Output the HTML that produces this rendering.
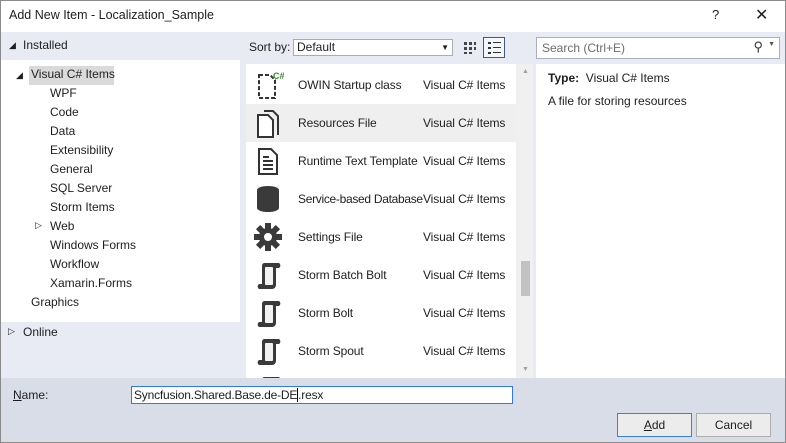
<!DOCTYPE html>
<html><head><style>
*{margin:0;padding:0;box-sizing:border-box}
body{width:786px;height:443px;overflow:hidden;font-family:"Segoe UI","Liberation Sans",sans-serif;font-size:12px;color:#1e1e1e;background:#e8ebf4;position:relative}
.a{position:absolute}
.win{left:0;top:0;width:786px;height:443px;border:1px solid #8a8a8a}
.title{left:1px;top:1px;width:784px;height:31px;background:#fff}
.tree div{position:absolute;white-space:nowrap}
.row{position:absolute;left:0;width:270px;height:38px}
.row .n{position:absolute;left:52px;top:12px;letter-spacing:-.1px}
.row .t{position:absolute;left:177px;top:12px;letter-spacing:-.1px}
.ic{position:absolute;left:8px;top:4px}
.btn{height:24px;width:75px;background:#ececec;border:1px solid #adadad;text-align:center;line-height:22px}
</style></head><body>
<div class="a title"></div>
<div class="a" style="left:9px;top:8px;font-size:12.5px">Add New Item - Localization_Sample</div>
<div class="a" style="left:712px;top:7px;font-size:13px">?</div>
<div class="a" style="left:755px;top:5px;font-size:16px">✕</div>
<div class="a" style="left:9px;top:40px;font-size:9px">◢</div>
<div class="a" style="left:23px;top:38px">Installed</div>
<div class="a" style="left:1px;top:60px;width:239px;height:262px;background:#fff"></div>
<div class="a" style="left:29px;top:66px;width:85px;height:19px;background:#dadada"></div>
<div class="a tree" style="left:0;top:0">
<div style="left:16px;top:70px;font-size:9px">◢</div>
<div style="left:31px;top:67px">Visual C# Items</div>
<div style="left:50px;top:86px">WPF</div>
<div style="left:50px;top:105px">Code</div>
<div style="left:50px;top:124px">Data</div>
<div style="left:50px;top:143px">Extensibility</div>
<div style="left:50px;top:162px">General</div>
<div style="left:50px;top:181px">SQL Server</div>
<div style="left:50px;top:200px">Storm Items</div>
<div style="left:35px;top:220px;font-size:9px">▷</div>
<div style="left:50px;top:219px">Web</div>
<div style="left:50px;top:238px">Windows Forms</div>
<div style="left:50px;top:257px">Workflow</div>
<div style="left:50px;top:276px">Xamarin.Forms</div>
<div style="left:31px;top:295px">Graphics</div>
<div style="left:8px;top:326px;font-size:9px">▷</div>
<div style="left:23px;top:325px">Online</div>
</div>
<div class="a" style="left:249px;top:40px">Sort by:</div>
<div class="a" style="left:293px;top:39px;width:160px;height:17px;background:#fff;border:1px solid #acacac;padding-left:3px;line-height:15px">Default<span style="position:absolute;right:3px;top:0;font-size:8px">▼</span></div>
<svg class="a" style="left:462px;top:40px" width="16" height="16"><g fill="#444"><rect x="2" y="2" width="3" height="3"/><rect x="7" y="2" width="3" height="3"/><rect x="12" y="2" width="2" height="3"/><rect x="2" y="7" width="3" height="3"/><rect x="7" y="7" width="3" height="3"/><rect x="12" y="7" width="2" height="3"/><rect x="2" y="12" width="3" height="2"/><rect x="7" y="12" width="3" height="2"/></g></svg>
<div class="a" style="left:483px;top:37px;width:22px;height:21px;border:1px solid #3c5a8a;background:#f4f6fa"></div>
<svg class="a" style="left:486px;top:40px" width="16" height="16"><g fill="#333"><rect x="2" y="2" width="3" height="2"/><rect x="7" y="2" width="8" height="1"/><rect x="2" y="7" width="3" height="2"/><rect x="7" y="7" width="8" height="1"/><rect x="2" y="12" width="3" height="2"/><rect x="7" y="12" width="8" height="1"/></g></svg>
<div class="a" style="left:536px;top:37px;width:244px;height:22px;background:#fff;border:1px solid #aab0c0;padding:3px 5px;color:#6d6d6d">Search (Ctrl+E)<span style="position:absolute;right:16px;top:1px;color:#333;font-size:13px">⚲</span><span style="position:absolute;right:4px;top:3px;font-size:7px;color:#555">▼</span></div>
<div class="a" style="left:246px;top:64px;width:287px;height:314px;background:#fff;overflow:hidden">
<div class="row" style="top:2px"><svg class="ic" width="30" height="30"><path d="M5 5h11l5 5v18H5z" fill="none" stroke="#333" stroke-width="2" stroke-dasharray="4 2"/><text x="19" y="9" font-size="9" font-weight="bold" fill="#388a34" font-family="Liberation Sans">C#</text></svg><span class="n">OWIN Startup class</span><span class="t">Visual C# Items</span></div>
<div class="row" style="top:40px;background:#efefef"><svg class="ic" width="30" height="30"><path d="M10 3h9l5 5v19" fill="none" stroke="#333" stroke-width="2"/><path d="M4 7h10l5 5v17H4z" fill="#fff" stroke="#333" stroke-width="2"/></svg><span class="n">Resources File</span><span class="t">Visual C# Items</span></div>
<div class="row" style="top:78px"><svg class="ic" width="30" height="30"><path d="M5 3h12l6 6v19H5z" fill="none" stroke="#333" stroke-width="2"/><path d="M9 11h6M9 15h10M9 19h10M9 23h10" stroke="#333" stroke-width="2"/></svg><span class="n">Runtime Text Template</span><span class="t">Visual C# Items</span></div>
<div class="row" style="top:116px"><svg class="ic" width="30" height="30"><path d="M3 6a11 4 0 0 1 22 0v18a11 4 0 0 1-22 0z" fill="#3a3a3a"/></svg><span class="n" style="letter-spacing:-.3px">Service-based Database</span><span class="t">Visual C# Items</span></div>
<div class="row" style="top:154px"><svg class="ic" width="30" height="30"><defs><rect id="t" x="-3" y="-14" width="6" height="28"/></defs><g transform="translate(14 15)" fill="#3a3a3a"><circle r="9"/><use href="#t"/><use href="#t" transform="rotate(45)"/><use href="#t" transform="rotate(90)"/><use href="#t" transform="rotate(135)"/><circle r="4" fill="#fff"/></g></svg><span class="n">Settings File</span><span class="t">Visual C# Items</span></div>
<div class="row" style="top:192px"><svg class="ic" width="30" height="30"><path d="M10 3h15a3 3 0 0 1 0 5h-3v17a4 4 0 0 1-4 4H5a3 3 0 0 1 0-5h3V6a3 3 0 0 1 2-3z" fill="#3a3a3a"/><rect x="11" y="7" width="8" height="18" rx="1" fill="#f2f2f2"/></svg><span class="n">Storm Batch Bolt</span><span class="t">Visual C# Items</span></div>
<div class="row" style="top:230px"><svg class="ic" width="30" height="30"><path d="M10 3h15a3 3 0 0 1 0 5h-3v17a4 4 0 0 1-4 4H5a3 3 0 0 1 0-5h3V6a3 3 0 0 1 2-3z" fill="#3a3a3a"/><rect x="11" y="7" width="8" height="18" rx="1" fill="#f2f2f2"/></svg><span class="n">Storm Bolt</span><span class="t">Visual C# Items</span></div>
<div class="row" style="top:268px"><svg class="ic" width="30" height="30"><path d="M10 3h15a3 3 0 0 1 0 5h-3v17a4 4 0 0 1-4 4H5a3 3 0 0 1 0-5h3V6a3 3 0 0 1 2-3z" fill="#3a3a3a"/><rect x="11" y="7" width="8" height="18" rx="1" fill="#f2f2f2"/></svg><span class="n">Storm Spout</span><span class="t">Visual C# Items</span></div>
<div class="row" style="top:306px"><svg class="ic" width="30" height="30"><path d="M10 3h15a3 3 0 0 1 0 5H8V6a3 3 0 0 1 2-3z" fill="#3a3a3a"/></svg></div>
<div class="a" style="left:270px;top:0;width:17px;height:314px;background:#f0f0f0"></div>
<div class="a" style="left:276px;top:4px;font-size:7px;color:#a0a0a0">▲</div>
<div class="a" style="left:276px;top:302px;font-size:7px;color:#a0a0a0">▼</div>
<div class="a" style="left:275px;top:197px;width:9px;height:35px;background:#c2c2c2"></div>
</div>
<div class="a" style="left:536px;top:64px;width:250px;height:314px;background:#fff"></div>
<div class="a" style="left:548px;top:71px"><b>Type:</b>&nbsp; Visual C# Items</div>
<div class="a" style="left:548px;top:94px">A file for storing resources</div>
<div class="a" style="left:1px;top:378px;width:784px;height:64px;background:#d9dde8"></div>
<div class="a" style="left:13px;top:388px"><u>N</u>ame:</div>
<div class="a" style="left:131px;top:386px;width:382px;height:18px;background:#fff;border:1px solid #3377ee;padding-left:2px;line-height:16px;letter-spacing:-.2px">Syncfusion.Shared.Base.de-DE<span style="border-left:1px solid #000"></span>.resx</div>
<div class="a btn" style="left:617px;top:413px;border-color:#3c7fd6"><u>A</u>dd</div>
<div class="a btn" style="left:696px;top:413px">Cancel</div>
<div class="a win"></div>
</body></html>
